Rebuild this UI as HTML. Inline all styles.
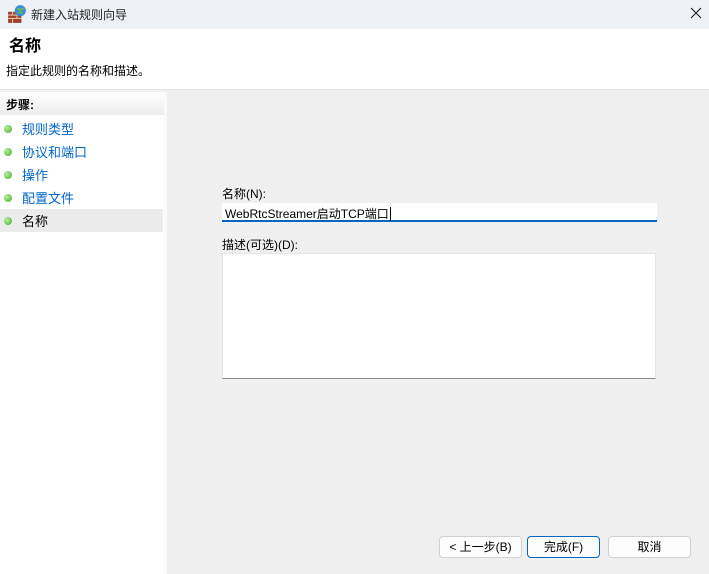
<!DOCTYPE html>
<html><head><meta charset="utf-8"><style>
*{margin:0;padding:0;box-sizing:border-box}
body{width:709px;height:574px;overflow:hidden;background:#f0f0f0;font-family:"Liberation Sans","Noto Sans CJK SC",sans-serif;font-size:12px;color:#000;position:relative}
.abs{position:absolute}
</style></head><body>
<div class="abs" style="left:0;top:0;width:709px;height:29px;background:#eef1f5"></div>
<svg class="abs" style="left:7px;top:4px" width="20" height="20" viewBox="0 0 18 18">
<rect x="1" y="7" width="12" height="10" fill="#a0412c"/>
<path d="M1 10h12M1 13h12M5 7v3M9 10v3M5 13v4" stroke="#e8c0a0" stroke-width="1"/>
<circle cx="12" cy="6" r="5" fill="#3b8fd6"/><path d="M9 4q3 2 6 0M10 8q2-2 4 1" stroke="#6cc04a" stroke-width="1.5" fill="none"/>
</svg>
<div class="abs" style="left:31px;top:6px;font-size:12px;color:#222">新建入站规则向导</div>
<svg class="abs" style="left:690px;top:7px" width="12" height="12"><path d="M1 1L11 11M11 1L1 11" stroke="#111" stroke-width="1"/></svg>
<div class="abs" style="left:0;top:29px;width:709px;height:60px;background:#fff"></div>
<div class="abs" style="left:9px;top:32px;font-size:16px;font-weight:bold">名称</div>
<div class="abs" style="left:6px;top:62px;font-size:12px">指定此规则的名称和描述。</div>
<div class="abs" style="left:0;top:89px;width:709px;height:1px;background:#e2e2e2"></div>
<div class="abs" style="left:0;top:92px;width:164px;height:482px;background:#fff"></div>
<div class="abs" style="left:0;top:92px;width:164px;height:23px;background:linear-gradient(#fff,#ededed)"></div>
<div class="abs" style="left:6px;top:96px;font-weight:bold">步骤:</div>
<div class="abs" style="left:164px;top:92px;width:3px;height:482px;background:#fafafa"></div>
<div class="abs" style="left:0;top:209px;width:163px;height:23px;background:#ebebeb"></div>
<div class="abs" style="left:22px;top:118px;color:#0066cc;font-size:13px;line-height:23px">规则类型<br>协议和端口<br>操作<br>配置文件<br><span style="color:#000">名称</span></div>
<div class="abs" style="left:4px;top:125px">
<div style="width:8px;height:8px;border-radius:50%;background:radial-gradient(circle at 35% 35%,#b8ef9a,#3fae2a);margin-bottom:15px"></div>
<div style="width:8px;height:8px;border-radius:50%;background:radial-gradient(circle at 35% 35%,#b8ef9a,#3fae2a);margin-bottom:15px"></div>
<div style="width:8px;height:8px;border-radius:50%;background:radial-gradient(circle at 35% 35%,#b8ef9a,#3fae2a);margin-bottom:15px"></div>
<div style="width:8px;height:8px;border-radius:50%;background:radial-gradient(circle at 35% 35%,#b8ef9a,#3fae2a);margin-bottom:15px"></div>
<div style="width:8px;height:8px;border-radius:50%;background:radial-gradient(circle at 35% 35%,#b8ef9a,#3fae2a)"></div>
</div>
<div class="abs" style="left:222px;top:185px">名称(N):</div>
<div class="abs" style="left:222px;top:203px;width:435px;height:19px;background:#fff;border-bottom:2px solid #0067c0"></div>
<div class="abs" style="left:225px;top:205px;font-size:12px">WebRtcStreamer启动TCP端口<span style="border-left:1px solid #000;margin-left:1px"></span></div>
<div class="abs" style="left:222px;top:236px">描述(可选)(D):</div>
<div class="abs" style="left:222px;top:253px;width:434px;height:126px;background:#fff;border:1px solid #e5e5e5;border-bottom:1px solid #888"></div>
<div class="abs" style="left:439px;top:536px;width:83px;height:22px;background:#fdfdfd;border:1px solid #d0d0d0;border-radius:4px;text-align:center;line-height:20px">&lt; 上一步(B)</div>
<div class="abs" style="left:527px;top:536px;width:73px;height:22px;background:#fdfdfd;border:1px solid #0067c0;border-radius:4px;text-align:center;line-height:20px">完成(F)</div>
<div class="abs" style="left:608px;top:536px;width:83px;height:22px;background:#fdfdfd;border:1px solid #d0d0d0;border-radius:4px;text-align:center;line-height:20px">取消</div>
</body></html>
